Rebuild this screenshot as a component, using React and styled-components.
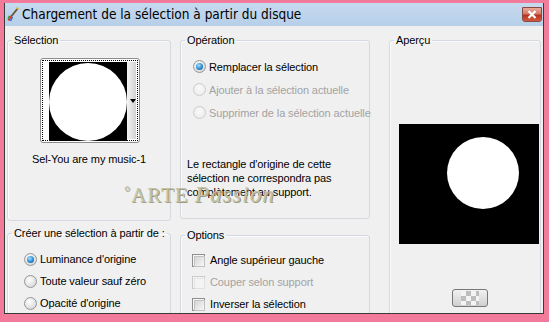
import React from "react";
import styled, { createGlobalStyle } from "styled-components";

const GlobalStyle = createGlobalStyle`
  html, body {
    margin: 0;
    padding: 0;
    width: 549px;
    height: 322px;
    overflow: hidden;
    background: #f27b9b;
  }
  * { box-sizing: border-box; }
`;

const uiFont = `"Liberation Sans", Arial, sans-serif`;

export default function App() {
  return (
    <>
      <GlobalStyle />
      <Window>
        <TitleBar>
          <AppIcon />
          <Title>Chargement de la sélection à partir du disque</Title>
          <CloseButton>
            <svg width="10" height="9" viewBox="0 0 10 9">
              <path d="M1.5 1 L8.5 8 M8.5 1 L1.5 8" stroke="#fff" strokeWidth="2.2" />
            </svg>
          </CloseButton>
        </TitleBar>
        <Body>
          <Column $width={164} $gap={5}>
            <Group $height={188}>
              <Legend>Sélection</Legend>
              <Picker>
                <FocusRing>
                  <Thumb>
                    <Circle $size={78} />
                  </Thumb>
                  <ThumbStrip>
                    <Arrow />
                  </ThumbStrip>
                </FocusRing>
              </Picker>
              <FileName>Sel-You are my music-1</FileName>
            </Group>
            <Group $height={90}>
              <Legend>Créer une sélection à partir de :</Legend>
              <OptionList $top={8} $left={16} $row={22}>
                <Radio checked label="Luminance d'origine" />
                <Radio label="Toute valeur sauf zéro" />
                <Radio label="Opacité d'origine" />
              </OptionList>
            </Group>
          </Column>

          <Column $width={190} $gap={9} $left={9}>
            <Group $height={186}>
              <Legend>Opération</Legend>
              <OptionList $top={8} $left={12} $row={23}>
                <Radio checked label="Remplacer la sélection" />
                <Radio disabled label="Ajouter à la sélection actuelle" />
                <Radio disabled label="Supprimer de la sélection actuelle" />
              </OptionList>
              <Note>
                Le rectangle d'origine de cette
                <br />
                sélection ne correspondra pas
                <br />
                complètement au support.
              </Note>
            </Group>
            <Group $height={90}>
              <Legend>Options</Legend>
              <OptionList $top={7} $left={11} $row={22}>
                <Check label="Angle supérieur gauche" />
                <Check disabled label="Couper selon support" />
                <Check label="Inverser la sélection" />
              </OptionList>
            </Group>
          </Column>

          <Column $width={152} $left={19}>
            <Group $height={290}>
              <Legend>Aperçu</Legend>
              <Preview>
                <PreviewCircle />
              </Preview>
              <CheckerButton>
                <Checker />
              </CheckerButton>
            </Group>
          </Column>
        </Body>
        <Watermark>
          <Degree>°</Degree>ARTE <Script>Passion</Script>
        </Watermark>
      </Window>
    </>
  );
}

function AppIcon() {
  return (
    <IconBox>
      <svg width="13" height="15" viewBox="0 0 13 15">
        <path d="M11 1 L3 11" stroke="#6a5a3a" strokeWidth="2" />
        <path d="M4 9 L1.5 13.5" stroke="#e23a2a" strokeWidth="2.4" />
        <path d="M2.5 9 L1 11.5" stroke="#2ea84a" strokeWidth="1.6" />
        <path d="M5.5 10 L3.5 14" stroke="#2f6fd8" strokeWidth="1.6" />
        <path d="M9 1 L12 2" stroke="#f0c040" strokeWidth="1.2" />
      </svg>
    </IconBox>
  );
}

function Radio({ label, checked, disabled }) {
  return (
    <OptionRow $disabled={disabled}>
      <RadioDot $checked={checked} $disabled={disabled} />
      <span>{label}</span>
    </OptionRow>
  );
}

function Check({ label, disabled }) {
  return (
    <OptionRow $disabled={disabled} $gap={5}>
      <CheckBox $disabled={disabled} />
      <span>{label}</span>
    </OptionRow>
  );
}

const Window = styled.div`
  position: relative;
  margin: 3px 0 0 4px;
  width: 540px;
  height: 311px;
  border: 1px solid #3a3a3a;
  border-top: none;
  display: flex;
  flex-direction: column;
  overflow: hidden;
  font-family: ${uiFont};
  font-size: 11px;
  letter-spacing: -0.1px;
  color: #000;
`;

const TitleBar = styled.div`
  height: 23px;
  flex: none;
  display: flex;
  align-items: center;
  background: linear-gradient(#c6daef, #b7cfe9);
`;

const IconBox = styled.div`
  width: 16px;
  height: 23px;
  display: flex;
  align-items: center;
  justify-content: center;
`;

const Title = styled.div`
  margin-left: 1px;
  font-family: "DejaVu Sans Condensed", "DejaVu Sans", sans-serif;
  font-size: 13.5px;
  letter-spacing: 0;
  color: #000;
  padding-bottom: 1px;
`;

const CloseButton = styled.div`
  margin-left: auto;
  margin-right: 1px;
  align-self: flex-start;
  margin-top: 4px;
  width: 20px;
  height: 15px;
  border: 1px solid #8a4a44;
  border-radius: 0 0 3px 3px;
  background: linear-gradient(#e9a99a 0%, #d47a68 45%, #b7321e 55%, #d25a3e 100%);
  display: flex;
  align-items: center;
  justify-content: center;
`;

const Body = styled.div`
  flex: 1;
  background: #f0f0f0;
  display: flex;
  align-items: flex-start;
  padding: 7px 2px 0 2px;
  overflow: hidden;
`;

const Column = styled.div`
  width: ${(p) => p.$width}px;
  margin-left: ${(p) => p.$left || 0}px;
  flex: none;
  display: flex;
  flex-direction: column;
  gap: ${(p) => p.$gap || 0}px;
`;

const Group = styled.fieldset`
  margin: 0;
  padding: 0;
  min-width: 0;
  height: ${(p) => p.$height}px;
  border: 1px solid #d3d9de;
  border-radius: 3px;
  box-shadow: inset 1px 1px 0 #fbfbfb;
  display: flex;
  flex-direction: column;
`;

const Legend = styled.legend`
  margin-left: 4px;
  padding: 0 2px;
  line-height: 14px;
  white-space: nowrap;
`;

const Picker = styled.div`
  align-self: center;
  margin-top: 11px;
  margin-left: 1px;
  width: 100px;
  height: 85px;
  border: 1px solid #8c8c8c;
  border-radius: 3px;
  background: #fff;
  padding: 1px;
`;

const FocusRing = styled.div`
  width: 100%;
  height: 100%;
  border: 1px dotted #000;
  display: flex;
  padding: 1px 1px 1px 6px;
`;

const Thumb = styled.div`
  width: 78px;
  height: 79px;
  background: #000;
  display: flex;
  align-items: center;
  justify-content: center;
`;

const Circle = styled.div`
  width: ${(p) => p.$size}px;
  height: ${(p) => p.$size}px;
  border-radius: 50%;
  background: #fff;
`;

const ThumbStrip = styled.div`
  flex: 1;
  background: linear-gradient(90deg, #f4f4f4, #d2d2d2);
  display: flex;
  align-items: center;
  justify-content: center;
`;

const Arrow = styled.div`
  width: 0;
  height: 0;
  margin-left: 3px;
  border-left: 3px solid transparent;
  border-right: 3px solid transparent;
  border-top: 4px solid #000;
`;

const FileName = styled.div`
  margin-top: 9px;
  text-align: center;
  line-height: 14px;
`;

const OptionList = styled.div`
  padding: ${(p) => p.$top}px 0 0 ${(p) => p.$left}px;
  display: flex;
  flex-direction: column;
  & > div {
    height: ${(p) => p.$row}px;
  }
`;

const OptionRow = styled.div`
  display: flex;
  align-items: center;
  gap: ${(p) => p.$gap || 3}px;
  color: ${(p) => (p.$disabled ? "#a3a3a3" : "#000")};
  white-space: nowrap;
`;

const RadioDot = styled.div`
  width: 13px;
  height: 13px;
  flex: none;
  border-radius: 50%;
  border: 1px solid ${(p) => (p.$disabled ? "#cdcdcd" : "#959696")};
  background: ${(p) =>
    p.$disabled
      ? "radial-gradient(circle at 50% 40%, #fafafa, #e8e8e8)"
      : "radial-gradient(circle at 40% 35%, #ffffff, #dcdcdc 70%, #cacaca)"};
  display: flex;
  align-items: center;
  justify-content: center;
  &::after {
    content: "";
    display: ${(p) => (p.$checked ? "block" : "none")};
    width: 7px;
    height: 7px;
    border-radius: 50%;
    background: radial-gradient(circle at 40% 35%, #a8e2fb, #2a8ad4 55%, #0f4f99);
  }
`;

const CheckBox = styled.div`
  width: 13px;
  height: 13px;
  flex: none;
  border: 1px solid ${(p) => (p.$disabled ? "#cacaca" : "#8e8f8f")};
  background: #f6f6f6;
  padding: 1px;
  &::after {
    content: "";
    display: block;
    width: 100%;
    height: 100%;
    border: 1px solid ${(p) => (p.$disabled ? "#e2e2e2" : "#c2c2c2")};
    background: ${(p) =>
      p.$disabled ? "#f4f4f4" : "linear-gradient(135deg, #d6d6d6, #f7f7f7)"};
  }
`;

const Note = styled.p`
  margin: 33px 0 0 6px;
  line-height: 14px;
`;

const Preview = styled.div`
  margin: 77px 0 0 9px;
  width: 140px;
  height: 120px;
  background: #000;
  padding: 13px 0 0 48px;
`;

const PreviewCircle = styled.div`
  width: 72px;
  height: 72px;
  border-radius: 50%;
  background: #fff;
`;

const CheckerButton = styled.div`
  margin: 45px 0 0 62px;
  width: 36px;
  height: 18px;
  border: 1px solid #777;
  border-radius: 3px;
  background: linear-gradient(#f2f2f2, #cfcfcf);
  display: flex;
  align-items: center;
  justify-content: center;
`;

const Checker = styled.div`
  width: 18px;
  height: 14px;
  background: repeating-conic-gradient(#bdbdbd 0 25%, #f4f4f4 0 50%) 0 0 / 10px 10px;
`;

const Watermark = styled.div`
  position: absolute;
  left: 119px;
  top: 179px;
  font-family: "Liberation Serif", serif;
  font-size: 21px;
  letter-spacing: 1px;
  color: #c4c1a4;
  text-shadow: 1px 1px 0 #9c9a84;
  white-space: nowrap;
  pointer-events: none;
`;

const Degree = styled.span`
  font-size: 15px;
  vertical-align: 6px;
`;

const Script = styled.span`
  font-style: italic;
  font-size: 23px;
`;
